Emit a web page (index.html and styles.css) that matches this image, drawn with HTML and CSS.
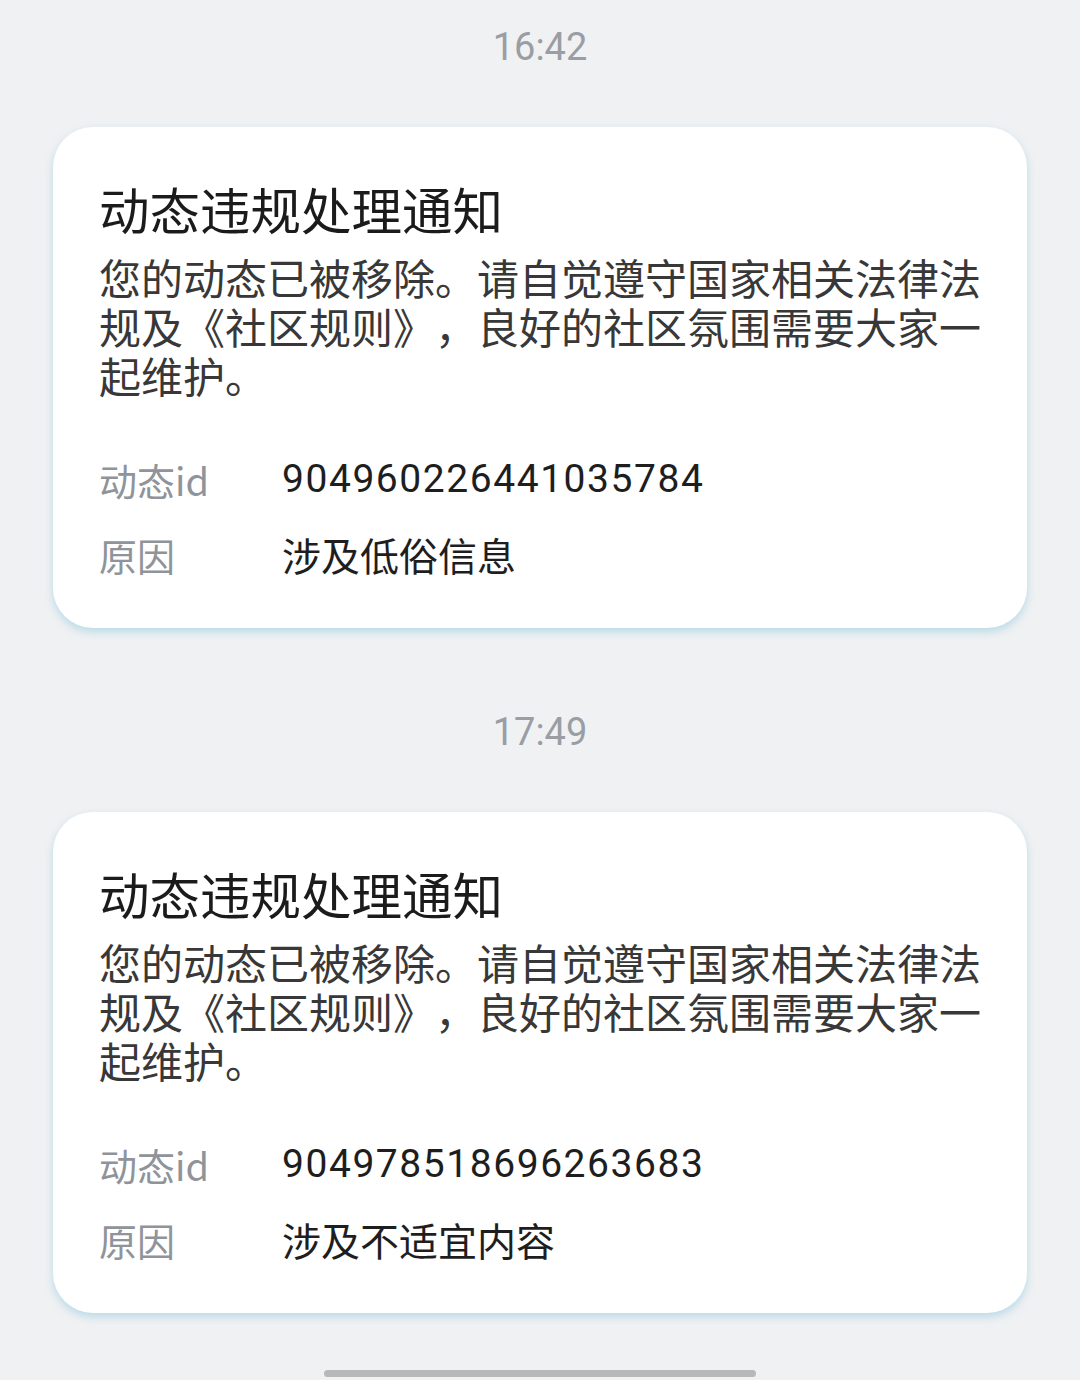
FILE: index.html
```html
<!DOCTYPE html>
<html>
<head>
    <meta charset="utf-8">
    <title>系统通知</title>
    <link rel="stylesheet" href="styles.css">
</head>
<body>
    <div class="thread">
        <div class="time">16:42</div>
        <div class="card">
            <h2 class="title">动态违规处理通知</h2>
            <p class="desc">您的动态已被移除。请自觉遵守国家相关法律法规及《社区规则》，良好的社区氛围需要大家一起维护。</p>
            <div class="rows">
                <div class="row">
                    <span class="label">动态id</span>
                    <span class="value num">904960226441035784</span>
                </div>
                <div class="row">
                    <span class="label">原因</span>
                    <span class="value">涉及低俗信息</span>
                </div>
            </div>
        </div>

        <div class="time">17:49</div>
        <div class="card">
            <h2 class="title">动态违规处理通知</h2>
            <p class="desc">您的动态已被移除。请自觉遵守国家相关法律法规及《社区规则》，良好的社区氛围需要大家一起维护。</p>
            <div class="rows">
                <div class="row">
                    <span class="label">动态id</span>
                    <span class="value num">904978518696263683</span>
                </div>
                <div class="row">
                    <span class="label">原因</span>
                    <span class="value">涉及不适宜内容</span>
                </div>
            </div>
        </div>
    </div>
    <div class="home-bar"></div>
</body>
</html>
```

FILE: styles.css
```css
html, body {
    height: 100%;
}
body {
    font-family: "Noto Sans CJK SC", sans-serif;
    background-color: #f0f1f3;
    margin: 0;
    position: relative;
    overflow: hidden;
}
.thread {
    padding: 0 53px;
}
.time {
    font-family: Roboto, "Noto Sans CJK SC", sans-serif;
    font-size: 38px;
    line-height: 50px;
    color: #9a9ea4;
    text-align: center;
    margin-top: 22px;
    margin-bottom: 55px;
}
.card + .time {
    margin-top: 79px;
}
.card {
    background: white;
    border-radius: 40px;
    padding: 42px 46px 36px;
    box-shadow: 0 4px 8px rgba(140, 200, 222, 0.55);
}
.title {
    margin: 0;
    font-size: 50.5px;
    font-weight: normal;
    line-height: 78px;
    color: #1b1b1b;
}
.desc {
    margin: 5px 0 0;
    font-size: 42px;
    line-height: 49px;
    color: #383838;
    text-spacing-trim: space-all;
}
.rows {
    margin-top: 43px;
}
.row {
    display: flex;
    align-items: center;
    height: 75px;
}
.label {
    width: 183px;
    flex-shrink: 0;
    font-size: 38px;
    color: #8f949a;
}
.label, .value {
    line-height: 75px;
}
.value {
    font-size: 39px;
    color: #1e1e1e;
}
.num {
    font-family: Roboto, "Noto Sans CJK SC", sans-serif;
    letter-spacing: 1.55px;
}
.home-bar {
    position: absolute;
    left: 324px;
    bottom: 3px;
    width: 432px;
    height: 7px;
    border-radius: 4px;
    background: #b7b8ba;
}
```
